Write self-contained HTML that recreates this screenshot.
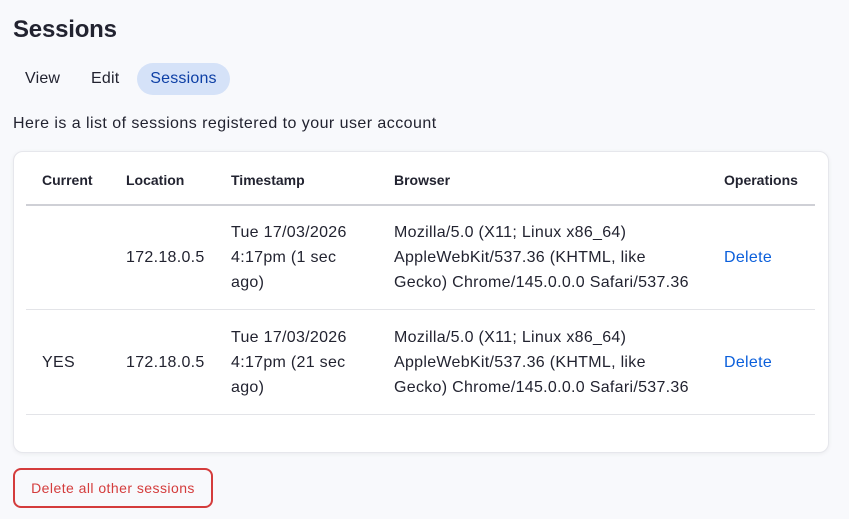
<!DOCTYPE html>
<html><head><style>
body{margin:0;width:849px;height:519px;background:#f8f9fc;font-family:"Liberation Sans",sans-serif;color:#222330;position:relative;overflow:hidden}
.a{position:absolute;white-space:nowrap}
h1{position:absolute;left:13px;top:16px;margin:0;font-size:24px;font-weight:600;letter-spacing:-0.2px}
.tab{position:absolute;top:63px;height:32px;line-height:32px;font-size:16px;letter-spacing:0.2px}
.card{position:absolute;left:13px;top:151px;width:814px;height:300px;background:#fff;border:1px solid #e6e7ec;border-radius:10px;box-shadow:0 1px 4px rgba(0,0,0,.06)}
.th{font-size:14px;font-weight:bold;top:172px}
.td{font-size:16px;line-height:25px;letter-spacing:0.3px}
.line{position:absolute;left:26px;width:789px;height:1px;background:#e3e4e8}
.del{color:#0b5fdb}
.btn{position:absolute;left:13px;top:468px;width:196px;height:36px;border:2px solid #d43c3c;border-radius:8px;color:#d43c3c;font-size:14px;line-height:36px;text-align:center;letter-spacing:0.45px}
</style></head><body>
<h1>Sessions</h1>
<div class="tab" style="left:25px">View</div>
<div class="tab" style="left:91px">Edit</div>
<div class="tab" style="left:137px;width:93px;background:#d5e2f8;border-radius:16px;color:#0d3fa5;text-align:center">Sessions</div>
<div class="a" style="left:13px;top:115px;font-size:16px;letter-spacing:0.45px">Here is a list of sessions registered to your user account</div>
<div class="card"></div>
<div class="a th" style="left:42px">Current</div>
<div class="a th" style="left:126px">Location</div>
<div class="a th" style="left:231px">Timestamp</div>
<div class="a th" style="left:394px">Browser</div>
<div class="a th" style="left:724px">Operations</div>
<div class="line" style="top:204px;height:2px;background:#cfd0d6"></div>
<div class="a td" style="left:126px;top:245px">172.18.0.5</div>
<div class="a td" style="left:231px;top:220px">Tue 17/03/2026<br>4:17pm (1 sec<br>ago)</div>
<div class="a td" style="left:394px;top:220px">Mozilla/5.0 (X11; Linux x86_64)<br>AppleWebKit/537.36 (KHTML, like<br>Gecko) Chrome/145.0.0.0 Safari/537.36</div>
<div class="a td del" style="left:724px;top:245px">Delete</div>
<div class="line" style="top:309px"></div>
<div class="a td" style="left:42px;top:350px">YES</div>
<div class="a td" style="left:126px;top:350px">172.18.0.5</div>
<div class="a td" style="left:231px;top:325px">Tue 17/03/2026<br>4:17pm (21 sec<br>ago)</div>
<div class="a td" style="left:394px;top:325px">Mozilla/5.0 (X11; Linux x86_64)<br>AppleWebKit/537.36 (KHTML, like<br>Gecko) Chrome/145.0.0.0 Safari/537.36</div>
<div class="a td del" style="left:724px;top:350px">Delete</div>
<div class="line" style="top:414px"></div>
<div class="btn">Delete all other sessions</div>
</body></html>
